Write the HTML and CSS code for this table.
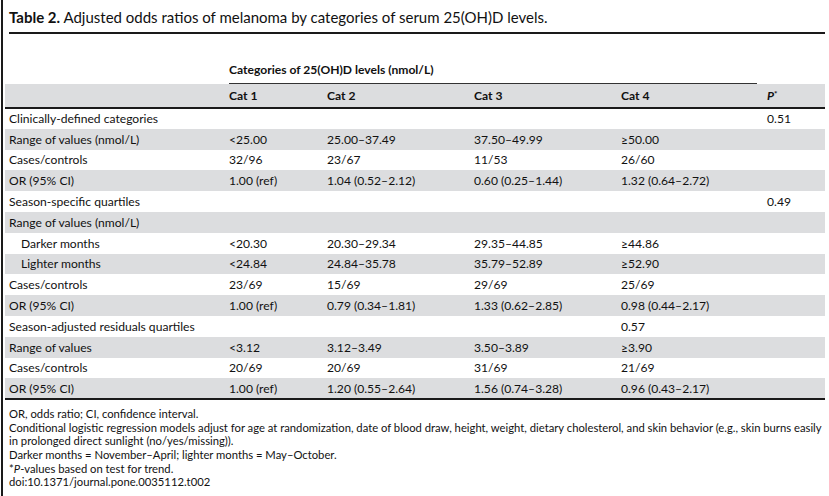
FILE: index.html
```html
<!DOCTYPE html>
<html lang="en">
<head>
<meta charset="utf-8">
<title>Table 2</title>
<link rel="stylesheet" href="styles.css">
</head>
<body>
<div class="frame">
  <div class="caption"><b>Table 2.</b> Adjusted odds ratios of melanoma by categories of serum 25(OH)D levels.</div>
  <table class="data">
    <colgroup>
      <col class="c-label"><col class="c1"><col class="c2"><col class="c3"><col class="c4"><col class="cp">
    </colgroup>
    <thead>
      <tr class="group">
        <th></th>
        <th colspan="4"><div class="group-title">Categories of 25(OH)D levels (nmol/L)</div></th>
        <th></th>
      </tr>
      <tr class="heads">
        <th></th>
        <th>Cat 1</th>
        <th>Cat 2</th>
        <th>Cat 3</th>
        <th>Cat 4</th>
        <th><i>P</i><sup>*</sup></th>
      </tr>
    </thead>
    <tbody>
      <tr><td>Clinically-defined categories</td><td></td><td></td><td></td><td></td><td>0.51</td></tr>
      <tr><td>Range of values (nmol/L)</td><td>&lt;25.00</td><td>25.00–37.49</td><td>37.50–49.99</td><td>≥50.00</td><td></td></tr>
      <tr><td>Cases/controls</td><td>32/96</td><td>23/67</td><td>11/53</td><td>26/60</td><td></td></tr>
      <tr><td>OR (95% CI)</td><td>1.00 (ref)</td><td>1.04 (0.52–2.12)</td><td>0.60 (0.25–1.44)</td><td>1.32 (0.64–2.72)</td><td></td></tr>
      <tr><td>Season-specific quartiles</td><td></td><td></td><td></td><td></td><td>0.49</td></tr>
      <tr><td>Range of values (nmol/L)</td><td></td><td></td><td></td><td></td><td></td></tr>
      <tr><td class="indent">Darker months</td><td>&lt;20.30</td><td>20.30–29.34</td><td>29.35–44.85</td><td>≥44.86</td><td></td></tr>
      <tr><td class="indent">Lighter months</td><td>&lt;24.84</td><td>24.84–35.78</td><td>35.79–52.89</td><td>≥52.90</td><td></td></tr>
      <tr><td>Cases/controls</td><td>23/69</td><td>15/69</td><td>29/69</td><td>25/69</td><td></td></tr>
      <tr><td>OR (95% CI)</td><td>1.00 (ref)</td><td>0.79 (0.34–1.81)</td><td>1.33 (0.62–2.85)</td><td>0.98 (0.44–2.17)</td><td></td></tr>
      <tr><td>Season-adjusted residuals quartiles</td><td></td><td></td><td></td><td>0.57</td><td></td></tr>
      <tr><td>Range of values</td><td>&lt;3.12</td><td>3.12–3.49</td><td>3.50–3.89</td><td>≥3.90</td><td></td></tr>
      <tr><td>Cases/controls</td><td>20/69</td><td>20/69</td><td>31/69</td><td>21/69</td><td></td></tr>
      <tr><td>OR (95% CI)</td><td>1.00 (ref)</td><td>1.20 (0.55–2.64)</td><td>1.56 (0.74–3.28)</td><td>0.96 (0.43–2.17)</td><td></td></tr>
    </tbody>
  </table>
  <div class="notes">
    <p>OR, odds ratio; CI, confidence interval.</p>
    <p>Conditional logistic regression models adjust for age at randomization, date of blood draw, height, weight, dietary cholesterol, and skin behavior (e.g., skin burns easily in prolonged direct sunlight (no/yes/missing)).</p>
    <p>Darker months = November–April; lighter months = May–October.</p>
    <p>*<i>P</i>-values based on test for trend.</p>
    <p>doi:10.1371/journal.pone.0035112.t002</p>
  </div>
</div>
</body>
</html>
```
FILE: styles.css
```css
html, body {
  margin: 0;
  padding: 0;
  background: #fff;
}
body {
  font-family: Lato, "Open Sans", "Liberation Sans", sans-serif;
  color: #111;
}
.frame {
  margin-left: 1px;
  border-left: 2px solid #1a1a1a;
  padding-left: 2px;
  min-height: 496px;
  box-sizing: border-box;
  width: 824px;
}
.caption {
  margin-left: 4px;
  padding-top: 8px;
  padding-bottom: 6px;
  line-height: 18px;
  font-size: 15px;
  border-bottom: 2px solid #1a1a1a;
}
.caption b {
  font-weight: 700;
}
.data {
  margin-top: 29px;
  width: 820px;
  table-layout: fixed;
  border-collapse: collapse;
  border-spacing: 0;
  font-size: 12.1px;
}
.c-label { width: 224px; }
.c1 { width: 98px; }
.c2 { width: 147px; }
.c3 { width: 147px; }
.c4 { width: 146px; }
.cp { width: 58px; }
.data th, .data td {
  padding: 0;
  text-align: left;
  vertical-align: middle;
  white-space: nowrap;
}
.group th {
  padding: 0;
  vertical-align: bottom;
}
.group-title {
  font-weight: 700;
  line-height: 14px;
  padding-bottom: 6px;
  margin-right: 10px;
  border-bottom: 1px solid #333;
}
.heads th {
  background: #dcdddf;
  height: 23px;
  font-weight: 700;
  border-bottom: 2px solid #1a1a1a;
}
.heads sup {
  font-size: 8px;
  vertical-align: 3px;
  line-height: 0;
}
.data td:first-child {
  padding-left: 4px;
}
.data td.indent {
  padding-left: 16px;
}
.data tbody tr {
  height: 20.8px;
}
.data tbody tr:nth-child(even) td {
  background: #dcdddf;
}
.data tbody tr:last-child td {
  border-bottom: 2px solid #1a1a1a;
}
.notes {
  margin-top: 7px;
  margin-right: -4px;
  padding-left: 4px;
  font-size: 11.25px;
  line-height: 13.65px;
}
.notes p {
  margin: 0;
}
```
